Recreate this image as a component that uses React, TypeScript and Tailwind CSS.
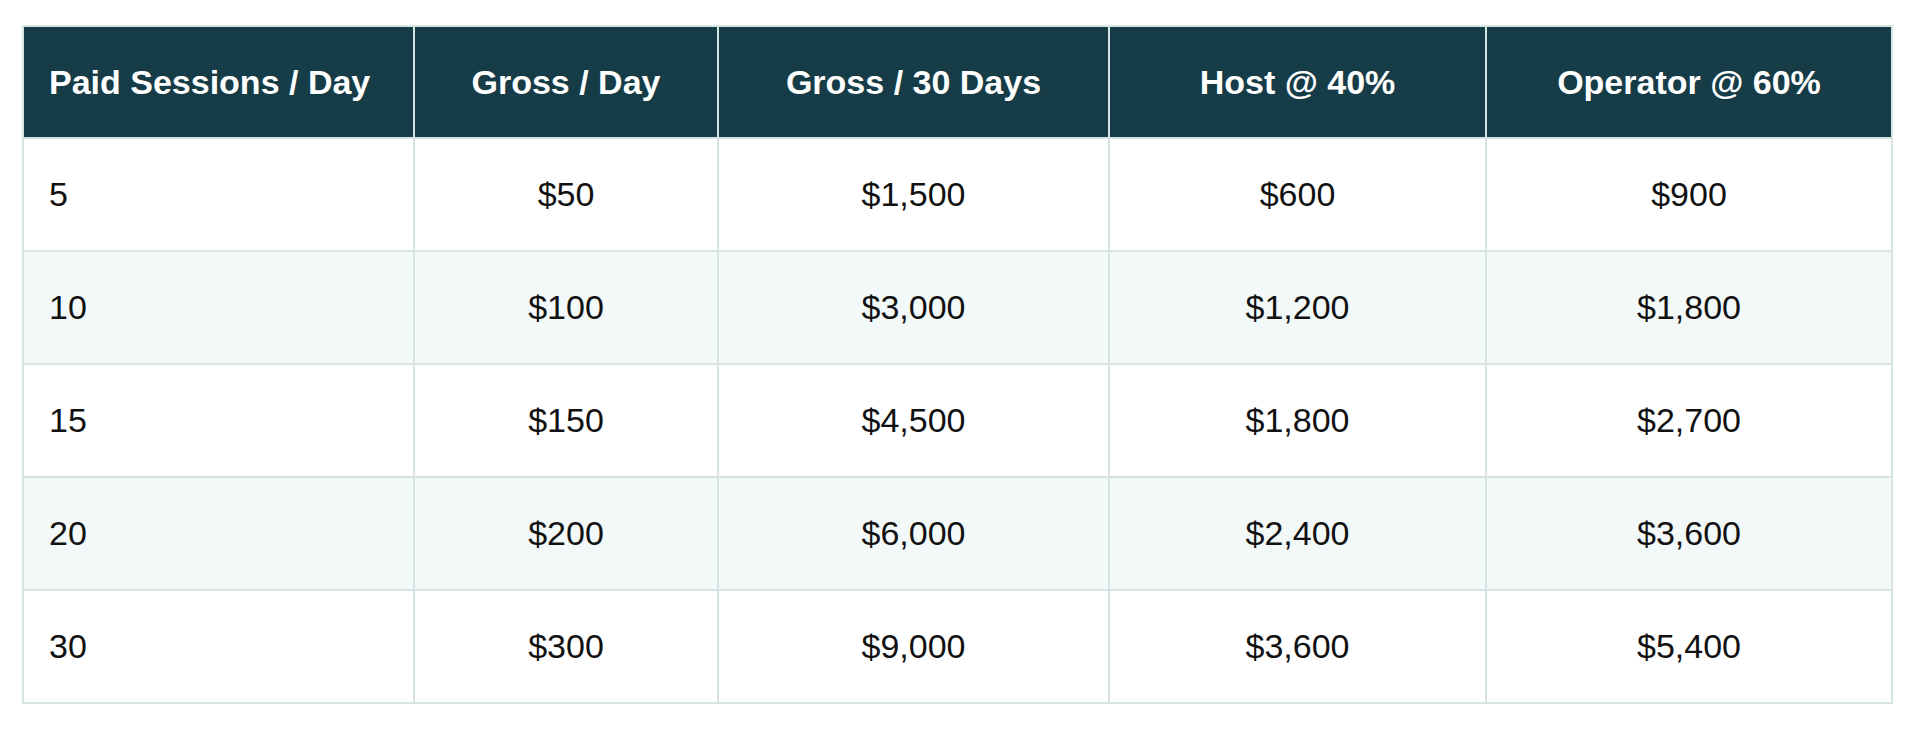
import React from "react";

const headers = ["Paid Sessions / Day", "Gross / Day", "Gross / 30 Days", "Host @ 40%", "Operator @ 60%"];
const rows = [
  ["5", "$50", "$1,500", "$600", "$900"],
  ["10", "$100", "$3,000", "$1,200", "$1,800"],
  ["15", "$150", "$4,500", "$1,800", "$2,700"],
  ["20", "$200", "$6,000", "$2,400", "$3,600"],
  ["30", "$300", "$9,000", "$3,600", "$5,400"],
];

export default function App() {
  return (
    <div className="w-[1920px] h-[736px] bg-white pt-[25px] pl-[22px]" style={{ fontFamily: '"Liberation Sans", Arial, sans-serif' }}>
      <table className="w-[1869px] border-collapse border-2 border-[#d6e4e4] text-[34px] table-fixed">
        <colgroup>
          <col className="w-[391px]" />
          <col className="w-[304px]" />
          <col className="w-[391px]" />
          <col className="w-[377px]" />
          <col className="w-[406px]" />
        </colgroup>
        <thead>
          <tr className="h-[112px] bg-[#163c47] text-white">
            {headers.map((h, i) => (
              <th
                key={h}
                className={`border-2 border-[#d6e4e4] font-bold ${i === 0 ? "text-left pl-[25px]" : "text-center"}`}
              >
                {h}
              </th>
            ))}
          </tr>
        </thead>
        <tbody>
          {rows.map((r, ri) => (
            <tr key={ri} className={`h-[113px] ${ri % 2 === 1 ? "bg-[#f3f8f8]" : "bg-white"} text-[#111]`}>
              {r.map((c, i) => (
                <td
                  key={i}
                  className={`border-2 border-[#d6e4e4] ${i === 0 ? "text-left pl-[25px]" : "text-center"}`}
                >
                  {c}
                </td>
              ))}
            </tr>
          ))}
        </tbody>
      </table>
    </div>
  );
}
